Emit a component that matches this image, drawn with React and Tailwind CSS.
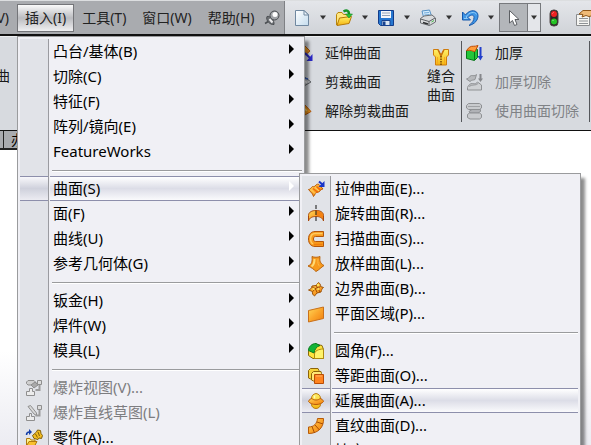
import React from 'react';

const ORANGE = '#f79a1c';
const EDGE = '#b85a08';

function Icon({ children, size = 'size-[18px]', box = '0 0 18 18' }) {
  return (
    <svg className={`${size} shrink-0`} viewBox={box} fill="none" aria-hidden="true">
      <defs>
        <linearGradient id="gold" x1="0" y1="0" x2="1" y2="1">
          <stop offset="0" stopColor="#ffd95a" />
          <stop offset="0.5" stopColor="#fba62c" />
          <stop offset="1" stopColor="#ef7d0c" />
        </linearGradient>
        <linearGradient id="yellow" x1="0" y1="0" x2="0" y2="1">
          <stop offset="0" stopColor="#fff068" />
          <stop offset="1" stopColor="#f4b410" />
        </linearGradient>
        <linearGradient id="paper" x1="0" y1="0" x2="1" y2="1">
          <stop offset="0" stopColor="#ffffff" />
          <stop offset="1" stopColor="#c4dcee" />
        </linearGradient>
      </defs>
      {children}
    </svg>
  );
}

/* ---------- drop-down menu icons ---------- */

const ExtrudeSurface = () => (
  <Icon>
    <path d="M1.500 9.500C3.500 9.500 4 7.500 5.500 6.500c1 .5 2.500 0 3.500-1.500 1-1 2-1 3-.5l4 4.500c-1.500 0-2.500 1-3.500 2.500-1.500 1-3 .5-4 2L6.500 16.500 5.500 14z" fill="url(#gold)" stroke={EDGE} />
    <path d="M6 8.500l5 4M9.500 6.500l4 3.500" stroke="#f36a08" strokeWidth="1.500" />
    <path d="M4 9.500l4 4M8 7.500l4 3.500" stroke="#ffd864" />
    <path d="M12 1.500l4 3.500" stroke="#1a35c8" strokeWidth="2" />
    <path d="M17.500 1v6h-6z" fill="#1a35c8" />
  </Icon>
);
const RevolveSurface = () => (
  <Icon>
    <path d="M1.500 16V10.500C1.500 7 5 5.500 9 5.500s7.500 1.500 7.500 5V16c-1-3.500-4-4.500-7.500-4.500S2.500 12.500 1.500 16z" fill="url(#gold)" stroke="#a8480a" />
    <path d="M9.500 6v5c3 0 5 .5 6.500 2.500V10.500C15.500 7.500 12.500 6 9.500 6z" fill="#f58212" />
    <path d="M9 0v4M9 6v4M9 12v4" stroke="#111" />
  </Icon>
);
const SweepSurface = () => (
  <Icon>
    <path d="M16.500 1.500H8C4 1.500 1.500 4.500 1.500 9s2.500 7.500 6.500 7.500h8.500v-5H8.500C7 11.500 6.500 10.500 6.500 9s.5-2.500 2-2.500h8z" fill={ORANGE} stroke="#b4560a" />
    <path d="M15.500 3.500H8.500C5.500 3.500 3.500 5.500 3.500 9c0 2 1 4 2.500 5" stroke="#ffca60" strokeWidth="1.500" />
    <path d="M7 14.500h8.500" stroke="#ef7d0c" strokeWidth="1.500" />
  </Icon>
);
const LoftSurface = () => (
  <Icon>
    <path d="M5 1.500c2 1 6 1 8 0-.5 4 0 7 4 9-3 2-4.500 4-8 6-2-2-4.500-4-8-5.500C5 9.500 5.500 6 5 1.500z" fill={ORANGE} stroke="#b9640f" />
    <path d="M7.500 4c0 4-.5 6-3 7.500" stroke="#ffda74" strokeWidth="2" />
    <path d="M11 4c-.5 4 0 6 2 7.500" stroke="#ffb846" />
  </Icon>
);
const BoundarySurface = () => (
  <Icon>
    <path d="M1.500 10c2-.5 3-1.500 3.500-4L9 5.500l2.500-3c1.500 1 2.500 2.500 2 4l3 1c-1.500 1-2 2.500-2.500 4.500l-4 1L7.500 16c-1.500-1-2.500-2.500-2-4.500z" fill="url(#gold)" stroke="#9c5208" />
    <path d="M5 7c2 0 4 2 5 5.500M13 7c-2 0-6 1.500-7 4.500M9 5l4 7" stroke="#9a4a06" />
    <path d="M10 5.500l2-1M6 9.500l1.500-1M10.500 9.500l1.500-1" stroke="#ffe75e" strokeWidth="2" />
  </Icon>
);
const PlanarSurface = () => (
  <Icon>
    <path d="M1.500 5.500l15-3.500v11.500L1.500 17z" fill="url(#gold)" stroke="#c9701a" />
  </Icon>
);
const Fillet = () => (
  <Icon>
    <path d="M1.500 8.500L8 2l7 1.500 1.500 4v9H6l-4.500-3z" fill="#ffe33c" stroke="#8a6a08" />
    <path d="M7.500 16.500V12c0-3 4-5 9-5v9.500z" fill="#fff36a" stroke="#b08a10" />
    <path d="M1.500 8.500C1.500 4.500 5 1.500 9 1.500l4 2C9.500 4.500 7.500 7.500 7 11z" fill="#12b437" stroke="#087a1c" />
  </Icon>
);
const OffsetSurface = () => (
  <Icon>
    <path d="M1.500 3.500l2-2H11l1 2v8.500H3.500l-2-1z" fill="#f6d23a" stroke="#8e6408" />
    <path d="M4.500 6.500l2-2H14l.5 2V14H6.500l-2-1z" fill="#ffe775" stroke="#8e6408" />
    <path d="M7.500 7.500h9v9h-9z" fill="#ff8420" stroke="#b94c05" />
    <path d="M9 9h6" stroke="#ffb05c" />
  </Icon>
);
const RadiateSurface = () => (
  <Icon>
    <path d="M9 1.500c3 .5 4.500 2.500 4.500 5v6c0 2-2 4-4.500 4s-4.500-2-4.500-4v-6C4.500 4 6 2 9 1.500z" fill="url(#yellow)" stroke="#b97d10" />
    <path d="M1.500 9.500C2 7.500 4 6.500 5 6.500c1.500 2 6.500 2 8 0 1 0 3 1 3.500 3-1.500 2-4 3-7.500 3s-6-1-7.500-3z" fill="url(#gold)" stroke={EDGE} />
    <path d="M7.500 3.500v3" stroke="#fffbb8" strokeWidth="1.500" />
  </Icon>
);
const RuledSurface = () => (
  <Icon>
    <path d="M10.500 1.500h6c.5 8.500-5 15-15 15V10c5.500 0 8.500-3.500 9-8.500z" fill="url(#gold)" stroke={EDGE} />
    <path d="M10 5l6 2M8 8l4.500 5M5 9.500L7.500 16" stroke="#a64c04" />
  </Icon>
);
const FillSurface = () => (
  <Icon>
    <path d="M9 4l7 5-7 6-7-6z" fill="url(#gold)" stroke={EDGE} />
  </Icon>
);
const ExplodedView = () => (
  <Icon>
    <path d="M1.500 3l1.500-1.500h6L11 3.500 9 6H3L1.500 4.500z" fill="#d0d0d0" stroke="#8f8f8f" />
    <path d="M6 6l4-3 3 3-4 3z" fill="#a9a9a9" stroke="#8d8d8d" />
    <path d="M12.500 1.500h4v4h-4z" fill="#dcdcdc" stroke="#8f8f8f" />
    <path d="M14.500 6v5h-4" stroke="#9c9c9c" strokeWidth="2" />
    <path d="M1.500 12.500h3v-3h3v3h2v4h-8z" fill="#ececec" stroke="#8f8f8f" />
  </Icon>
);
const ExplodeSketch = () => (
  <Icon>
    <path d="M3 2.500l2.500-1 6 7.500v2.500L9 10z" fill="#d8d8d8" stroke="#8f8f8f" />
    <path d="M12.500 1.500h4v4h-4z" fill="#dcdcdc" stroke="#8f8f8f" />
    <path d="M14.500 6v5.500h-4" stroke="#9c9c9c" strokeWidth="2" />
    <path d="M1.500 12.500h3v-3h2v3h3v4h-8z" fill="#ececec" stroke="#8f8f8f" />
  </Icon>
);
const InsertPart = () => (
  <Icon>
    <path d="M1.500 6c0-2 1-3 3-3" stroke="#143fa8" strokeWidth="1.500" />
    <path d="M4 0v6l3-3z" fill="#143fa8" />
    <path d="M7.500 6.500l4-3.500 1-2 3 .5.5 3 1.500 2-1 3-2.500-.5-1 1.500-4-1z" fill="#f2bd22" stroke="#815f08" />
    <path d="M10.500 5l2 3.500M13 3l1.500 4" stroke="#815f08" />
    <path d="M1.500 9.500H5l1 1.500h4v6H1.500z" fill="#fff08a" stroke="#b17a0e" />
    <path d="M1.500 17l2.500-4.500h8L9.500 17z" fill="#f9c12e" stroke="#b17a0e" />
  </Icon>
);

/* ---------- toolbar icons ---------- */

const NewDoc = () => (
  <Icon>
    <path d="M2.500 1.500h8.500l4.500 4V16.500h-13z" fill="url(#paper)" stroke="#7088a0" />
    <path d="M11 1.500v4.500h4.500z" fill="#eef6fb" stroke="#7088a0" />
  </Icon>
);
const OpenDoc = () => (
  <Icon>
    <path d="M1.500 16V5.500l1.500-2h4l1.500 2H14V9" fill="#ffe680" stroke="#b8860b" />
    <path d="M2 16.500L4.500 9l12-1.500-2.500 7z" fill="url(#yellow)" stroke="#b57908" />
    <path d="M8.500 2.500C12 .5 14 2 14 5" stroke="#15932a" strokeWidth="2.500" />
    <path d="M10.500 5h7L14 9z" fill="#2cc437" stroke="#0d7a1c" strokeWidth=".5" />
  </Icon>
);
const SaveDoc = () => (
  <Icon>
    <path d="M1.500 1.500h15v15h-13l-2-2z" fill="#2677d0" stroke="#123c8a" />
    <path d="M4 2h10v7H4z" fill="#f5f7fa" />
    <path d="M5 4h8M5 6.500h8" stroke="#93a3b8" />
    <path d="M5 11.500h8v5H5z" fill="#dbe7f4" stroke="#17428f" />
    <path d="M6 12.500h2.500V16H6z" fill="#17428f" />
  </Icon>
);
const Print = () => (
  <Icon>
    <path d="M4.500 8L3 2l7.500-1 2 6z" fill="#d4ecfd" stroke="#5591c5" />
    <path d="M5 4l5-.5M5.500 6l5-.5" stroke="#70a9d8" />
    <path d="M1.500 9.500L5 7l8-1 3.500 3v4l-6 3.500-9-2.500z" fill="#d9dbdd" stroke="#6b6e72" />
    <path d="M1.500 10l8.500 2.500 6-3.500M10 12.500v4" stroke="#5b5e62" />
    <path d="M4 13.500l5 1.500" stroke="#2c2e30" strokeWidth="1.500" />
    <path d="M12.500 13l2.500-1.500" stroke="#45b848" />
  </Icon>
);
const Undo = () => (
  <Icon>
    <path d="M1.500 3v8h8L7 8.500C9 5.500 13 5 13 8.500c0 3-1.500 5-5 8 6-1.500 9-5.500 9-10C17 1 9-.5 4.500 6z" fill="#3f96e6" stroke="#1558ac" />
    <path d="M3 9.500h3.500L5 8C8 3 14 2 15.500 5.500" stroke="#8ccaf8" />
  </Icon>
);
const Cursor = () => (
  <Icon>
    <path d="M4.500 1.500V14l3-2.500 2 5 2.500-1-2-5h4z" fill="#fff" stroke="#5c5f63" />
  </Icon>
);
const TrafficLight = () => (
  <Icon size="h-[18px] w-[10px]" box="0 0 10 18">
    <rect x="1" y="1" width="8" height="16" rx="3.500" fill="#2a2424" stroke="#514848" />
    <circle cx="5" cy="5" r="3" fill="#ee2222" />
    <circle cx="5" cy="12.500" r="3" fill="#25c425" />
    <path d="M3.500 4.500l1-1M3.500 12l1-1" stroke="#fff" strokeOpacity=".6" />
  </Icon>
);
const Properties = () => (
  <Icon>
    <path d="M1.500 5.500h13v11h-13z" fill="#f5f5f2" stroke="#8a8c8e" />
    <path d="M4 9.500h9M4 12h9M4 14.500h9" stroke="#8e9296" />
    <path d="M4 5l4-3.500h9l1 5-4 1-3-1-4 1.500 1-2.500z" fill="#efba76" stroke="#8f5618" />
  </Icon>
);
const Pin = () => (
  <Icon>
    <path d="M6 12l-4 2.500" stroke="#4b4e52" strokeWidth="1.500" />
    <path d="M4 7.500c3-1 7.500 3.500 7 8-4 .5-8.500-4-7-8z" fill="#6f7276" stroke="#4b4e52" />
    <path d="M6.500 10l3 3.500" stroke="#ececee" strokeWidth="2" />
    <circle cx="11.500" cy="6.500" r="4.500" fill="#9fa2a6" stroke="#4b4e52" />
    <circle cx="12" cy="5.500" r="2.500" fill="#fff" />
  </Icon>
);

/* ---------- command ribbon icons ---------- */

const ExtendSurface = () => (
  <Icon>
    <path d="M3 8l7-6 5 5-6 5z" fill="url(#gold)" stroke={EDGE} />
    <path d="M10 9l5 5" stroke="#2a28c8" strokeWidth="2" />
    <path d="M17.500 10v7h-6z" fill="#2a28c8" />
  </Icon>
);
const TrimSurface = () => (
  <Icon>
    <path d="M2 8l7-4.500 7 5.500-7 4z" fill="#c9cbce" stroke="#66696d" />
    <path d="M7 4.500l6 1.500" stroke="#3b61c0" strokeWidth="1.500" />
    <path d="M9 8l3 1.500" stroke="#fff" strokeWidth="1.500" />
  </Icon>
);
const UntrimSurface = () => (
  <Icon>
    <path d="M2 9l8-6 6 6.500-7 4z" fill={ORANGE} stroke={EDGE} />
    <path d="M9 6l3 3" stroke="#ffe27a" strokeWidth="1.500" />
  </Icon>
);
const Knit = () => (
  <Icon>
    <path d="M1.500 1.500H6L9 7l3-5.500h4.500v5.500l-2 2v8h-11V9l-2-2z" fill="url(#yellow)" stroke="#cf7c0d" />
    <path d="M6 1.500L9 8l3-6.500" stroke="#c8720a" strokeWidth="1.500" />
    <path d="M9 8v9" stroke="#7a4706" strokeWidth="1.500" strokeDasharray="1.500 1" />
    <path d="M5.500 9v7M12.500 9v7" stroke="#f9a81c" />
  </Icon>
);
const Thicken = () => (
  <Icon>
    <path d="M1.500 7l3-3 8 1.500v8l-3 3-8-2z" fill="#24c53a" stroke="#08751a" />
    <path d="M9.500 8v8" stroke="#08751a" />
    <path d="M1.500 6.500C3 5 4 3 5 3c2-1.500 4 0 8-1.500l-3 6c-3 0-4-2-8.500-1z" fill="#ff9c38" stroke="#c04c06" />
    <path d="M15.500 3v10" stroke="#223fcb" strokeWidth="2" />
    <path d="M12.500 12h5.500l-2.500 4.500z" fill="#223fcb" />
  </Icon>
);
const ThickenCut = () => (
  <Icon>
    <path d="M1.500 6C4 6 4 3 6.500 2.500c2 0 3 1 5-1L10 6.500c-2 1-3 0-5 2z" fill="#b7b9bc" stroke="#8f9194" />
    <path d="M2.500 14.500c1-3 3-4 5-4s3 1 5-1.500l4 3v5h-14z" fill="#cfd1d4" stroke="#8f9194" />
    <path d="M4 13.500c3-3 5 0 9-3" stroke="#a1a3a6" strokeWidth="1.500" />
    <path d="M15.500 1v5" stroke="#85878b" strokeWidth="2" />
    <path d="M13 5.500h5L15.500 9z" fill="#85878b" />
  </Icon>
);
const SurfaceCut = () => (
  <Icon>
    <path d="M1.500 3.500l2-2h11l2 1.500v3l-2 1.500h-11l-2-1.500z" fill="#c9cbce" stroke="#8f9194" />
    <path d="M3 4.500h12" stroke="#a0a2a5" />
    <path d="M4 9.500l3-2h8.500v2L13 11H5z" fill="#b0b2b6" stroke="#8f9194" />
    <path d="M2.500 12.500l2-1.500h10l2 1.500v3l-2 1.500H5l-2.500-1.500z" fill="#c9cbce" stroke="#8f9194" />
  </Icon>
);

/* ---------- menus ---------- */

const insertMenu = [
  { label: '凸台/基体(B)', sub: true },
  { label: '切除(C)', sub: true },
  { label: '特征(F)', sub: true },
  { label: '阵列/镜向(E)', sub: true },
  { label: 'FeatureWorks', sub: true },
  null,
  { label: '曲面(S)', sub: true, active: true },
  { label: '面(F)', sub: true },
  { label: '曲线(U)', sub: true },
  { label: '参考几何体(G)', sub: true },
  null,
  { label: '钣金(H)', sub: true },
  { label: '焊件(W)', sub: true },
  { label: '模具(L)', sub: true },
  null,
  { label: '爆炸视图(V)...', icon: ExplodedView, disabled: true },
  { label: '爆炸直线草图(L)', icon: ExplodeSketch, disabled: true },
  { label: '零件(A)...', icon: InsertPart },
];

const surfaceMenu = [
  { label: '拉伸曲面(E)...', icon: ExtrudeSurface },
  { label: '旋转曲面(R)...', icon: RevolveSurface },
  { label: '扫描曲面(S)...', icon: SweepSurface },
  { label: '放样曲面(L)...', icon: LoftSurface },
  { label: '边界曲面(B)...', icon: BoundarySurface },
  { label: '平面区域(P)...', icon: PlanarSurface },
  null,
  { label: '圆角(F)...', icon: Fillet },
  { label: '等距曲面(O)...', icon: OffsetSurface },
  { label: '延展曲面(A)...', icon: RadiateSurface, active: true },
  { label: '直纹曲面(D)...', icon: RuledSurface },
  { label: '填充(I)...', icon: FillSurface },
];

function MenuItem({ item }) {
  const { label, sub, active, disabled, icon: Glyph } = item;
  const gutter = active
    ? 'border-y border-[#8d8fab] bg-linear-to-b from-[#f8f8fb] via-[#cfd1dc] to-[#ececf2]'
    : 'bg-[#e1e3e8]';
  const body = active
    ? 'border-y border-[#8d8fab] bg-linear-to-b from-white via-[#dcdde7] to-[#fafafc]'
    : 'border-y border-transparent';
  return (
    <button type="button" role="menuitem" disabled={disabled} className="flex h-[25px] w-full text-left">
      <span className={`flex h-full w-7 shrink-0 items-center justify-center ${gutter}`}>{Glyph && <Glyph />}</span>
      <span className="h-full w-px shrink-0 bg-[#9a9ba0]" />
      <span className={`ml-px flex h-full flex-1 items-start justify-between pl-[3px] ${body}`}>
        <span className={disabled ? 'text-[#7d7d80]' : 'text-black'}>{label}</span>
        {sub && (
          <svg className={`mt-1 mr-2 h-[10px] w-[5px] ${active ? 'fill-white' : 'fill-black'}`} viewBox="0 0 5 10" aria-hidden="true">
            <path d="M0 0l5 5-5 5z" />
          </svg>
        )}
      </span>
    </button>
  );
}

function Menu({ items, label, className }) {
  return (
    <div
      role="menu"
      aria-label={label}
      className={`absolute border border-[#9a9b9d] bg-[#f0f0f5] p-[2px] text-[15px] leading-[22px] shadow-[4px_5px_3px_rgba(0,0,0,0.45)] ${className}`}
    >
      {items.map((item, i) =>
        item ? (
          <MenuItem key={item.label} item={item} />
        ) : (
          <div key={`sep-${i}`} role="separator" className="flex h-3">
            <span className="w-7 bg-[#e1e3e8]" />
            <span className="w-px bg-[#9a9ba0]" />
            <span className="ml-[3px] mt-[6px] h-[2px] flex-1 border-t border-[#9a9b9d] bg-white" />
          </div>
        )
      )}
    </div>
  );
}

function MenuBarItem({ label, open }) {
  return (
    <button
      type="button"
      aria-expanded={open}
      className={`h-7 shrink-0 border px-[7px] ${
        open ? 'border-[#747579] bg-linear-to-b from-[#fafafa] via-[#bbbcc0] to-[#f0f0f2]' : 'border-transparent'
      }`}
    >
      {label}
    </button>
  );
}

function DropArrow() {
  return (
    <svg className="h-[5px] w-[6px]" viewBox="0 0 6 5" aria-hidden="true">
      <path d="M0 .5h6L3 4.500z" fill="#333" />
    </svg>
  );
}

function SplitTool({ label, icon: Glyph }) {
  return (
    <div className="flex w-[42px] shrink-0 items-center">
      <button type="button" aria-label={label} className="flex w-6 justify-start">
        <Glyph />
      </button>
      <button type="button" aria-label={`${label}选项`} className="flex h-5 w-3 items-center justify-center">
        <DropArrow />
      </button>
    </div>
  );
}

function RibbonRow({ label, icon: Glyph, disabled }) {
  return (
    <button
      type="button"
      disabled={disabled}
      className={`flex h-[29px] items-center gap-3 whitespace-nowrap ${disabled ? 'text-[#7f8286]' : 'text-[#1a1a1a]'}`}
    >
      <Glyph />
      <span>{label}</span>
    </button>
  );
}

export default function App() {
  return (
    <div className="relative flex h-screen w-full flex-col overflow-hidden bg-white text-[14px] leading-5 font-['Noto_Sans','Noto_Sans_CJK_SC',sans-serif]">
      <header className="flex h-9 shrink-0 border-t border-b-2 border-t-[#dcdee0] border-b-[#111] bg-[#d7dadf]">
        <nav className="flex w-[285px] shrink-0 items-center border-r border-[#7f8185] bg-[#a9abaf] text-[#222]">
          <span className="flex w-[17px] shrink-0 justify-end overflow-hidden">
            <MenuBarItem label="视图(V)" />
          </span>
          <MenuBarItem label="插入(I)" open />
          <MenuBarItem label="工具(T)" />
          <MenuBarItem label="窗口(W)" />
          <MenuBarItem label="帮助(H)" />
          <button type="button" aria-label="固定菜单" className="ml-auto mr-1 flex">
            <Pin />
          </button>
        </nav>
        <div className="flex min-w-0 flex-1 items-center overflow-hidden bg-linear-to-b from-[#e4e6ea] to-[#d0d3d8] pl-2">
          <SplitTool label="新建" icon={NewDoc} />
          <SplitTool label="打开" icon={OpenDoc} />
          <SplitTool label="保存" icon={SaveDoc} />
          <SplitTool label="打印" icon={Print} />
          <SplitTool label="撤消" icon={Undo} />
          <div className="-ml-1 flex h-[29px] shrink-0 border border-[#77797d]">
            <button type="button" aria-label="选择" className="flex w-7 items-center justify-center border-r border-[#77797d] bg-[#b3b6ba]">
              <Cursor />
            </button>
            <button type="button" aria-label="选择选项" className="flex w-3 items-center justify-center bg-[#e4e6ea]">
              <DropArrow />
            </button>
          </div>
          <button type="button" aria-label="重建模型" className="ml-2 flex shrink-0">
            <TrafficLight />
          </button>
          <button type="button" aria-label="文件属性" className="ml-4 flex shrink-0">
            <Properties />
          </button>
        </div>
      </header>

      <section className="flex h-[95px] shrink-0 items-start overflow-hidden border-t border-b border-t-[#eceef0] border-b-[#111] bg-[#d7dadf]">
        <div className="flex w-[295px] shrink-0">
          <button type="button" className="mt-[29px] flex w-[10px] justify-end overflow-hidden text-[#1a1a1a]">
            曲
          </button>
        </div>
        <div className="flex w-[126px] shrink-0 flex-col pt-px">
          <RibbonRow label="延伸曲面" icon={ExtendSurface} />
          <RibbonRow label="剪裁曲面" icon={TrimSurface} />
          <RibbonRow label="解除剪裁曲面" icon={UntrimSurface} />
        </div>
        <button type="button" className="flex w-10 shrink-0 flex-col items-center pt-[11px] text-[#1a1a1a] leading-[19px]">
          <Knit />
          <span>缝合</span>
          <span>曲面</span>
        </button>
        <span className="mt-1 h-[81px] w-px shrink-0 bg-[#55575b]" />
        <div className="flex w-[127px] shrink-0 flex-col pl-[3px] pt-px">
          <RibbonRow label="加厚" icon={Thicken} />
          <RibbonRow label="加厚切除" icon={ThickenCut} disabled />
          <RibbonRow label="使用曲面切除" icon={SurfaceCut} disabled />
        </div>
        <span className="mt-1 h-[81px] w-px shrink-0 bg-[#55575b]" />
      </section>

      <main className="min-h-0 flex-1 bg-linear-to-b from-white from-70% to-[#ececf2]">
        <div className="flex h-[19px] w-8 border-b-2 border-[#222] bg-[#a9abaf]">
          <span className="w-1 shrink-0 border-r border-[#222]" />
          <button type="button" className="pl-[7px] leading-[18px]">
            办
          </button>
        </div>
      </main>

      <Menu items={insertMenu} label="插入" className="left-[17px] top-9 w-[288px]" />
      <Menu items={surfaceMenu} label="曲面" className="left-[299px] top-[173px] w-[282px]" />
    </div>
  );
}
